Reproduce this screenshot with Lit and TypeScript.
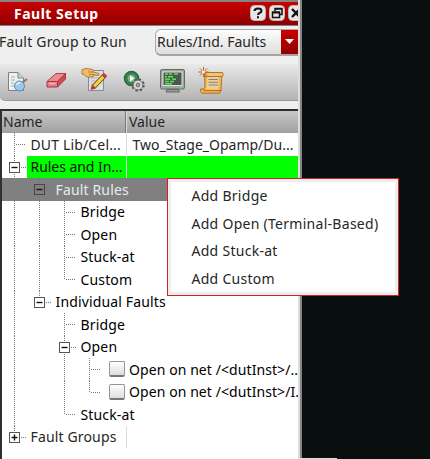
import { LitElement, html, svg, css, nothing } from "lit";
import { customElement, property } from "lit/decorators.js";

// Guide codes: "|" line, "t" tee, "l" elbow, "m" open box, "e" open box ending its branch,
// "p" closed box, " " blank, "s" open box on the selected row.
interface Row {
  guides: string;
  label: string;
  cls?: string;
  value?: string;
  check?: boolean;
  split?: boolean;
}

const ROWS: Row[] = [
  { guides: "t", label: "DUT Lib/Cel...", value: "Two_Stage_Opamp/Du...", split: true },
  { guides: "m", label: "Rules and In...", cls: "green", value: "", split: true },
  { guides: " s", label: "Fault Rules", cls: "selected" },
  { guides: "||t", label: "Bridge", cls: "strong" },
  { guides: "||t", label: "Open", cls: "strong" },
  { guides: "||t", label: "Stuck-at", cls: "strong" },
  { guides: "||l", label: "Custom", cls: "strong" },
  { guides: "|e", label: "Individual Faults", cls: "strong" },
  { guides: "| t", label: "Bridge", cls: "strong" },
  { guides: "| m", label: "Open", cls: "strong" },
  { guides: "| |t", label: "Open on net /<dutInst>/..", cls: "strong tight", check: true },
  { guides: "| |l", label: "Open on net /<dutInst>/I.", cls: "strong tight", check: true },
  { guides: "| l", label: "Stuck-at", cls: "strong" },
  { guides: "p", label: "Fault Groups", split: true },
];

@customElement("tree-guide")
class TreeGuide extends LitElement {
  @property() kind = " ";
  static styles = css`
    :host { display: block; width: 25px; height: 100%; flex: none; }
    svg { display: block; width: 25px; height: 23px; }
    .dots { stroke: #777; stroke-width: 1; stroke-dasharray: 1 1; fill: none; }
    .box { stroke: #555; fill: #fff; }
    .box.sel { fill: #808080; stroke: #444; }
    .sign { stroke: #111; stroke-width: 1.4; }
  `;
  render() {
    const k = this.kind;
    if (k === " ") return nothing;
    const boxed = "mesp".includes(k);
    const down = "|tms".includes(k);
    return html`<svg viewBox="0 0 25 23">
      <path class="dots" d="M12.5 0V${down ? 23 : 12}" />
      ${k !== "|" ? svg`<path class="dots" d="M${boxed ? 19 : 14} 11.5H24" />` : nothing}
      ${boxed
        ? svg`<rect class="box ${k === "s" ? "sel" : ""}" x="7.5" y="6.5" width="10" height="10" />
            <path class="sign" d="M9.5 11.5H15.5" />
            ${k === "p" ? svg`<path class="sign" d="M12.5 8.5V14.5" />` : nothing}`
        : nothing}
    </svg>`;
  }
}

@customElement("tool-bar")
class ToolBar extends LitElement {
  static styles = css`
    :host {
      display: flex; align-items: center; box-sizing: border-box;
      height: 37px; padding-left: 4px; gap: 9px; margin-top: 7px;
      background: linear-gradient(#e9e9e9, #b3b3b3);
      border-bottom: 1px solid #999; border-bottom-left-radius: 5px;
    }
    svg { display: block; width: 30px; height: 32px; flex: none; }
    svg:nth-child(3) { margin-left: -2px; }
  `;
  render() {
    return html`
      <svg viewBox="0 0 30 32">
        <path d="M4.5 6.5H14L19.5 12V24.5H4.5Z" fill="#edf0f1" stroke="#79858a" />
        <path d="M14 6.5V12H19.5" fill="#cbd2d5" stroke="#79858a" />
        <path d="M7 11H11M7 14H11M7 17H10M7 20H10" stroke="#a7b0b4" />
        <path d="M18 17L23 13" stroke="#a7703c" stroke-width="2.2" />
        <circle cx="15.5" cy="20" r="5" fill="#9cc8ea" stroke="#5a8db5" />
        <path d="M12.5 19a3 3 0 0 1 4-2" stroke="#e4f3ff" stroke-width="1.5" fill="none" />
      </svg>
      <svg viewBox="0 0 30 32">
        <path d="M4 15.5L13 7.5H22.5L14.5 15.5Z" fill="#e58e92" stroke="#b93a44" />
        <path d="M4 15.5H14.5V21H4Z" fill="#dc8288" stroke="#b52f3b" />
        <path d="M14.5 15.5L22.5 7.5V13L14.5 21Z" fill="#c94c57" stroke="#b52f3b" />
        <path d="M6 17.5H12.5" stroke="#f0b5b8" stroke-width="1.5" />
      </svg>
      <svg viewBox="0 0 30 32">
        <path d="M8.5 4.5H23.5V24.5H8.5Z" fill="#dcdfe0" stroke="#858b8d" />
        <path d="M11 12H20M11 15H18M11 18H16" stroke="#b1b6b8" />
        <path d="M2 3.5L6 2.5L13 3.5Q15 4.5 13 6L19 7.5Q20 9 18 9.5L14 9L13 11H7Q4 8 2 8Z" fill="#f1bd62" stroke="#9d6d29" stroke-width=".8" />
        <path d="M8 6H13M9 8.5H14" stroke="#a6762e" stroke-width=".8" />
        <path d="M14 20.5L24.5 9.5" stroke="#6d5830" stroke-width="4.8" />
        <path d="M14 20.5L24.5 9.5" stroke="#f7d440" stroke-width="3.2" />
        <path d="M23.2 10.8L25.6 8.3" stroke="#cc3a36" stroke-width="4.8" />
        <path d="M12.2 18.8L11 23.5L15.7 22.2Z" fill="#d62a2a" stroke="#742b22" stroke-width=".5" />
      </svg>
      <svg viewBox="0 0 30 32">
        <circle cx="12.5" cy="12.5" r="7" fill="#3f8a56" stroke="#226b3b" stroke-width="1.5" />
        <circle cx="12.5" cy="12.5" r="4.6" fill="#75b286" stroke="#28713e" />
        <path d="M11 9.5V15.5L15.5 12.5Z" fill="#fff" />
        <circle cx="19" cy="19" r="5.4" fill="none" stroke="#5d5d5d" stroke-width="2.6" stroke-dasharray="2.3 1.94" />
        <circle cx="19" cy="19" r="4.8" fill="#d5d5d5" stroke="#6a6a6a" stroke-width=".8" />
        <circle cx="19" cy="19" r="1.8" fill="#aaa" stroke="#666" />
      </svg>
      <svg viewBox="0 0 30 32">
        <path d="M9 23.5H20.5L21.5 26H8Z" fill="#999" stroke="#666" />
        <rect x="2.5" y="3.5" width="24" height="19.5" rx="1.5" fill="#a1a6a3" stroke="#666b68" />
        <rect x="5" y="6" width="19" height="13.5" fill="#4d5652" stroke="#e0e3e1" />
        <path d="M7 8H10M11 8H14M16 8H20M7 10.7H9M10 10.7H15M7 13.2H12M14 13.2H18M7 15.6H11M12 15.6H16M7 17.8H14" stroke="#58e552" stroke-width="1.5" />
        <path d="M22 21.4H25" stroke="#58e552" stroke-width="1.4" />
      </svg>
      <svg viewBox="0 0 30 32">
        <path d="M7.5 7H25L24 25H5L8 21Z" fill="#efb45c" stroke="#b37525" />
        <path d="M10 11H22L21.2 23.5H9.5Z" fill="#f6cd8a" />
        <path d="M8 6.5H25.5Q27 8.5 25.5 10.5H8Z" fill="#f4c476" stroke="#b37525" />
        <path d="M3.5 23H6Q6.5 24.5 8 24.5H24L22.5 27.2H5Q2.5 26 3.5 23Z" fill="#efae55" stroke="#b37525" />
        <path d="M11.5 13.5H21M11.5 16.3H21M11.5 19H21" stroke="#7186a1" />
        <path d="M6.5 1V11M1.5 6H11.5M3 2.5L10 9.5M10 2.5L3 9.5" stroke="#bd5830" stroke-width="1" />
        <circle cx="6.5" cy="6" r="1.7" fill="#ffe5b4" />
      </svg>
    `;
  }
}

@customElement("app-root")
class AppRoot extends LitElement {
  static styles = css`
    :host {
      display: block; position: relative; width: 430px; height: 459px; overflow: hidden;
      background: #090e0e; color: #262626; font: 14px/22px "Noto Sans", "Open Sans", sans-serif;
      white-space: nowrap;
    }
    .panel {
      box-sizing: border-box; width: 302px; height: 459px; overflow: hidden;
      background: #efefef; border-right: 2px solid #858585;
      box-shadow: inset -2px 0 #dedede;
    }
    .content { width: 298px; overflow: hidden; }
    .title {
      display: flex; align-items: center; box-sizing: border-box; height: 26px; padding-left: 14px;
      border-top: 2px solid #858585; border-bottom: 1px solid #858080;
      background: linear-gradient(#c90000, #8d0000); color: #fff;
      font-weight: 700;
    }
    .title span { width: 236px; flex: none; letter-spacing: 0.5px; }
    .title svg { display: block; flex: none; width: 16px; height: 16px; margin: 0 3px 2px 0; }
    .picker { display: flex; align-items: center; height: 31px; }
    .picker .caption { width: 155px; flex: none; margin-left: -1px; padding-right: 1px; letter-spacing: 0.2px; }
    .combo {
      display: flex; box-sizing: border-box; width: 143px; height: 27px; margin-top: 1px;
      border: 1px solid #aaa; border-bottom: 2px solid #a4a4a4; border-right: 0; border-radius: 6px 0 0 6px;
      background: linear-gradient(#fdfdfd, #dedede); overflow: hidden; flex: none;
    }
    .combo .text { flex: 1; padding-left: 1px; line-height: 24px; }
    .combo .drop { display: flex; align-items: center; justify-content: center; width: 17px; background: linear-gradient(#c90000, #930000); }
    .combo svg { width: 9px; height: 5px; }
    .tree {
      margin-top: 8px; box-sizing: border-box; height: 351px; background: #fff;
      border-top: 2px solid #2d2d2d; border-left: 2px solid #303030;
    }
    .head { display: flex; height: 22px; line-height: 22px; background: linear-gradient(#c7c7c7, #a1a1a1); }
    .head .name { box-sizing: border-box; width: 124px; padding-left: 1px; border-right: 1px solid #777; }
    .head .val { flex: 1; padding-left: 2px; border-left: 1px solid #ddd; }
    .row { display: flex; height: 23px; line-height: 23px; }
    .row:nth-child(odd) { height: 22px; line-height: 22px; }
    .cell { display: flex; flex: none; width: 296px; overflow: hidden; }
    .split .cell { box-sizing: border-box; width: 125px; border-right: 1px solid #dcdcdc; }
    .label { flex: 1; padding-left: 3.5px; overflow: hidden; letter-spacing: 0.15px; }
    .value { flex: 1; padding-left: 5.5px; }
    .green .label, .green .value { background: #0f0; color: #111; }
    .green .label { letter-spacing: -0.05px; }
    .selected { background: #808080; color: #e2eeee; }
    .strong { color: #000; }
    .tight .label { padding-left: 4px; letter-spacing: 0.08px; }
    .tick {
      box-sizing: border-box; width: 16px; height: 16px; flex: none; margin: 3px 0 0 7px;
      border: 1px solid #969696; border-bottom: 2px solid #777; border-radius: 2px;
      background: linear-gradient(#fff, #ddd);
    }
    .menu {
      position: absolute; left: 167px; top: 178px; box-sizing: border-box; width: 232px; height: 118px;
      display: grid; grid-template-rows: repeat(4, 27.5px); padding: 3px 0 0 23.5px;
      border: 1px solid #d42020; background: #fff; box-shadow: inset 0 0 0 3px #eee;
      letter-spacing: 0.28px;
    }
    .menu div { line-height: 28px; }
    .menu div:nth-child(even) { line-height: 27px; }
    .edge { position: absolute; left: 300px; top: 458px; width: 37px; height: 1px; background: #ddd; }
  `;

  render() {
    return html`
      <div class="panel">
        <div class="content">
          <div class="title">
            <span>Fault Setup</span>
            ${["help", "float", "close"].map((k) => this.button(k))}
          </div>
          <div class="picker">
            <div class="caption">Fault Group to Run</div>
            <div class="combo">
              <div class="text">Rules/Ind. Faults</div>
              <div class="drop"><svg viewBox="0 0 9 5"><path d="M0 0H9L4.5 5Z" fill="#fff" /></svg></div>
            </div>
          </div>
          <tool-bar></tool-bar>
          <div class="tree">
            <div class="head"><div class="name">Name</div><div class="val">Value</div></div>
            ${ROWS.map((r) => this.row(r))}
          </div>
        </div>
      </div>
      <div class="menu">
        ${["Add Bridge", "Add Open (Terminal-Based)", "Add Stuck-at", "Add Custom"].map((t) => html`<div>${t}</div>`)}
      </div>
      <div class="edge"></div>
    `;
  }

  private row(r: Row) {
    return html`<div class="row ${r.cls ?? ""} ${r.split ? "split" : ""}">
      <div class="cell">
        ${[...r.guides].map((k) => html`<tree-guide .kind=${k}></tree-guide>`)}
        ${r.check ? html`<div class="tick"></div>` : nothing}
        <div class="label">${r.label}</div>
      </div>
      ${r.value !== undefined ? html`<div class="value">${r.value}</div>` : nothing}
    </div>`;
  }

  private button(kind: string) {
    const glyph =
      kind === "help"
        ? svg`<path d="M4.5 6Q4.5 3.4 8 3.4T11.5 5.8Q11.5 7.3 9.5 8Q8 8.6 8 10M8 11.3V13.2" stroke-width="2" />`
        : kind === "float"
          ? svg`<path d="M6 6V3.5H13V9.5H10.5M6 4H13M3.5 7H10.5V12.5H3.5ZM3.5 7.7H10.5" stroke-width="1.5" />`
          : svg`<path d="M4 4L12 12M12 4L4 12" stroke-width="2.4" />`;
    return html`<svg viewBox="0 0 16 16">
      <rect x=".5" y=".5" width="15" height="15" rx="4" fill="#e6e6e6" stroke="#bbb" />
      <g fill="none" stroke="#111">${glyph}</g>
    </svg>`;
  }
}
